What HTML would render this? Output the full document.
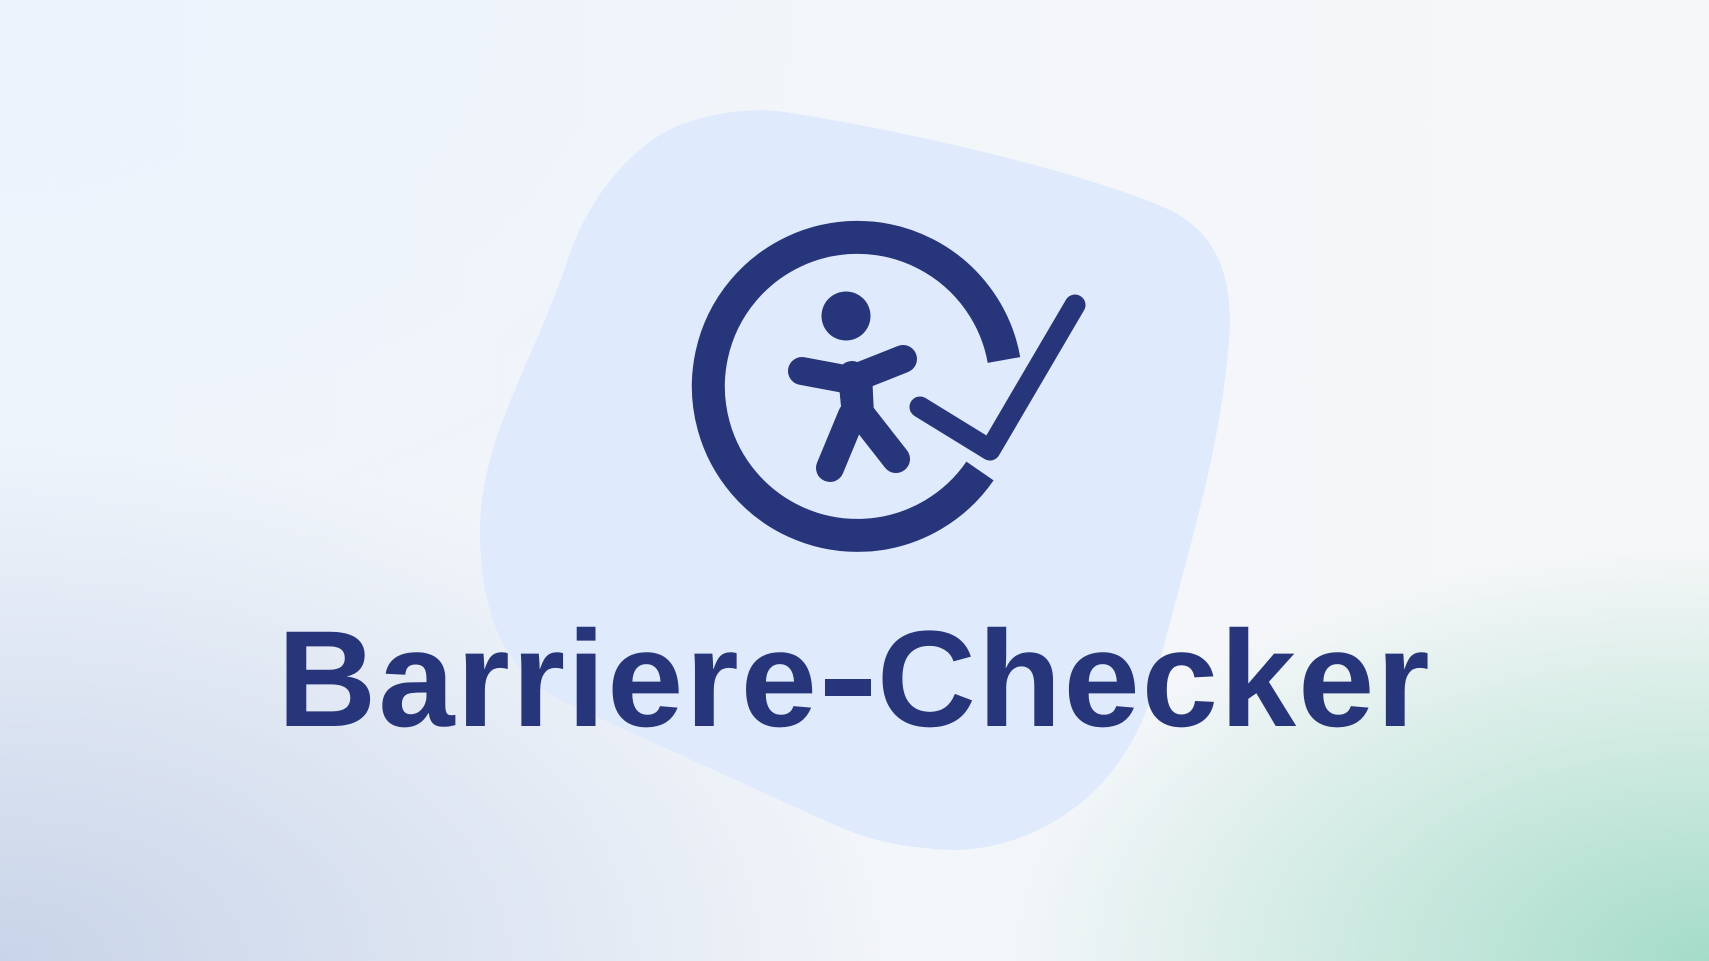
<!DOCTYPE html>
<html><head><meta charset="utf-8"><style>
html,body{margin:0;padding:0;width:1709px;height:961px;overflow:hidden}
body{position:relative;background:#f5f7f9;}
.bg{position:absolute;inset:0;
background:
radial-gradient(ellipse 700px 420px at 1709px 961px, rgba(160,218,198,0.95), rgba(160,218,198,0) 100%),
radial-gradient(ellipse 900px 520px at 0px 961px, rgba(200,212,232,1), rgba(200,212,232,0) 100%),
radial-gradient(ellipse 900px 600px at 0px 0px, rgba(236,243,253,1), rgba(236,243,253,0) 100%),
linear-gradient(90deg,#eff4fb,#f6f7f8);}
.t{position:absolute;left:0;width:1709px;top:600px;text-align:center;font-family:"Liberation Sans",sans-serif;font-weight:bold;font-size:137px;line-height:160px;color:#27367a;letter-spacing:2px}
.d{display:inline-block;width:46px;height:17px;background:#27367a;margin:0 6px;vertical-align:0.22em}
svg{position:absolute;left:0;top:0}
</style></head><body>
<div class="bg"></div>
<svg width="1709" height="961" viewBox="0 0 1709 961">
<path d="M785 112 C900 130 1080 170 1170 210 C1240 245 1232 320 1226 370 C1215 470 1185 560 1150 700 C1110 820 1000 860 926 848 C880 845 845 830 817 817 L560 700 C480 660 480 560 480 523 C485 430 530 370 567 262 C590 190 640 140 680 125 C720 110 760 108 785 112 Z" fill="#dfeafd"/>
<g transform="translate(0,3)">
<g fill="none" stroke-linecap="round" stroke-linejoin="round">
<path d="M1004 357 A149 149 0 1 0 980 468" stroke="#27367a" stroke-width="33" stroke-linecap="butt"/>
<path d="M920 404 L990 447 L1075 302" stroke="#dfeafd" stroke-width="36"/>
<path d="M920 404 L990 447 L1075 302" stroke="#27367a" stroke-width="21"/>
<path d="M802 368 L850 377 L903 356" stroke="#27367a" stroke-width="28"/>
<path d="M852 372 L856 412 M852 412 L830 465 M860 410 L896 456" stroke="#27367a" stroke-width="28"/>
<path d="M842 370 L868 370 L870 412 L846 412 Z" fill="#27367a" stroke="#27367a" stroke-width="8"/>
</g>
<circle cx="846" cy="313" r="24.5" fill="#27367a"/>
</g>
</svg>
<div class="t">Barriere<span class="d"></span>Checker</div>
</body></html>
